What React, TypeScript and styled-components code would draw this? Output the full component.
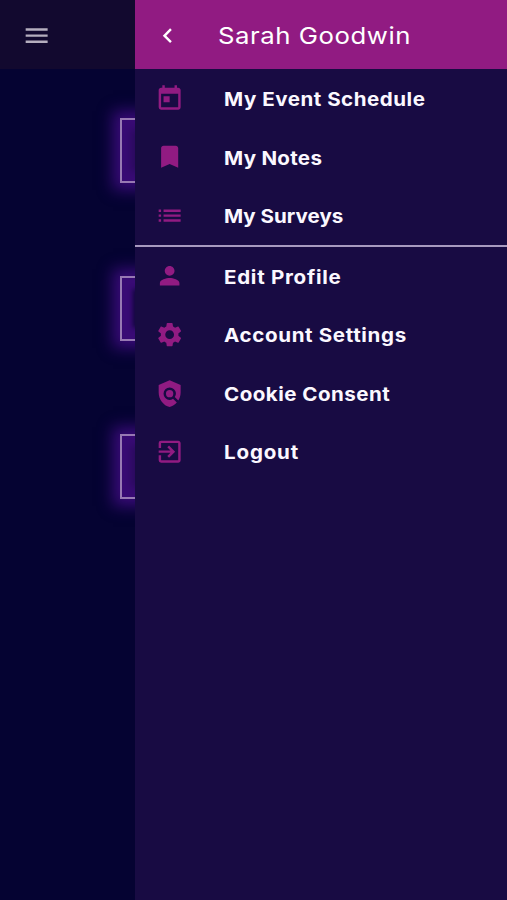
import React from 'react';
import styled, { createGlobalStyle } from 'styled-components';
import type { IconType } from 'react-icons';
import {
  MdBookmark, MdChevronLeft, MdExitToApp, MdList, MdMenu, MdPerson, MdPolicy, MdSettings, MdToday,
} from 'react-icons/md';

const GlobalStyle = createGlobalStyle`
  * { box-sizing: border-box; }
  body { margin: 0; background: #050332; font-family: Inter, sans-serif; }
`;

const Screen = styled.div`
  display: grid;
  grid-template-columns: 135.4px 1fr;
  height: 900px;
  overflow: hidden;
`;

const Backdrop = styled.div`
  overflow: hidden;
  background: #050332;
`;

const AppBar = styled.div`
  display: flex;
  align-items: center;
  height: 69px;
  padding: 2px 0 0 22px;
  background: #12092f;
  color: #b5aebf;
`;

const Tiles = styled.div`
  display: flex;
  flex-direction: column;
  gap: 92.5px;
  padding: 48.5px 0 0 119.5px;
`;

const Tile = styled.div<{ $dark?: boolean }>`
  flex: none;
  width: 70px;
  height: 65.5px;
  border: 2px solid #9779b3;
  background: ${(p) => (p.$dark ? '#0f063a' : '#290a5c')};
  box-shadow: 0 0 14px 7px #390b78,
    inset 0 0 ${(p) => (p.$dark ? '5px 11px' : '8px 9px')} #390b75;
`;

const Drawer = styled.nav`
  background: #180b43;
`;

const DrawerHeader = styled.div`
  display: flex;
  align-items: center;
  height: 69px;
  padding: 2px 0 0 17.2px;
  background: #911b82;
  color: #fff;
`;

const UserName = styled.span`
  margin: 1px 0 0 36.6px;
  font-size: 23.4px;
  line-height: 30px;
  font-weight: 400;
  letter-spacing: 0.5px;
  white-space: nowrap;
  transform: scaleX(1.1);
  transform-origin: left center;
`;

const MenuGroup = styled.div`
  & + & { border-top: 2px solid #a79abf; }
`;

const MenuItem = styled.div`
  display: flex;
  align-items: center;
  height: 58.6px;
  padding: 0.4px 0 0 19.5px;
  color: #911b82;

  ${MenuGroup} + ${MenuGroup} & { padding-top: 0; }
`;

const Label = styled.span<{ $tracking: number }>`
  margin: 3px 0 0 39.6px;
  font-size: 18.7px;
  line-height: 26px;
  font-weight: 650;
  letter-spacing: ${(p) => p.$tracking}px;
  color: #fbf8ff;
  white-space: nowrap;
  transform: scaleX(1.1);
  transform-origin: left center;
`;

type Item = { label: string; icon: IconType; tracking: number };

const groups: Item[][] = [
  [
    { label: 'My Event Schedule', icon: MdToday, tracking: 0.47 },
    { label: 'My Notes', icon: MdBookmark, tracking: 0.25 },
    { label: 'My Surveys', icon: MdList, tracking: 0 },
  ],
  [
    { label: 'Edit Profile', icon: MdPerson, tracking: 0.65 },
    { label: 'Account Settings', icon: MdSettings, tracking: 0.58 },
    { label: 'Cookie Consent', icon: MdPolicy, tracking: 0.43 },
    { label: 'Logout', icon: MdExitToApp, tracking: 0.75 },
  ],
];

export default function App() {
  return (
    <>
      <GlobalStyle />
      <Screen>
        <Backdrop>
          <AppBar><MdMenu size={29.3} /></AppBar>
          <Tiles>
            <Tile />
            <Tile $dark />
            <Tile />
          </Tiles>
        </Backdrop>
        <Drawer>
          <DrawerHeader>
            <MdChevronLeft size={29.3} />
            <UserName>Sarah Goodwin</UserName>
          </DrawerHeader>
          {groups.map((items, i) => (
            <MenuGroup key={i}>
              {items.map(({ label, icon: Icon, tracking }) => (
                <MenuItem key={label}>
                  <Icon size={29.3} />
                  <Label $tracking={tracking}>{label}</Label>
                </MenuItem>
              ))}
            </MenuGroup>
          ))}
        </Drawer>
      </Screen>
    </>
  );
}
